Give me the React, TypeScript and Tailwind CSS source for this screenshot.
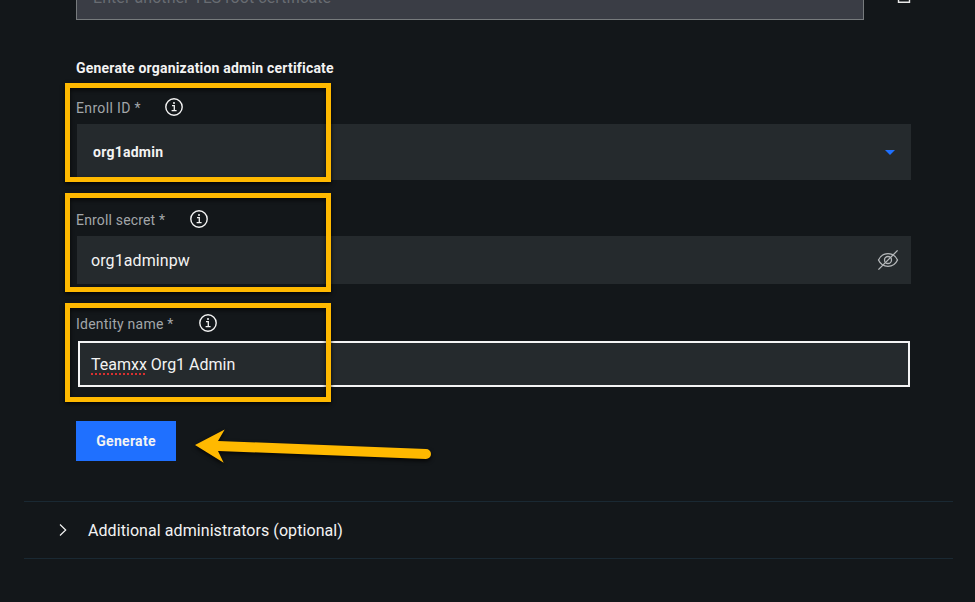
import React from "react";

function InfoIcon() {
  return (
    <svg width="18" height="18" viewBox="0 0 18 18" fill="none" stroke="#f3f3f3" className="shrink-0">
      <circle cx="9" cy="9" r="8.2" strokeWidth="1.4" />
      <path d="M7 7.7h2.3v5M6.6 12.7h5" strokeWidth="1.3" />
      <circle cx="9" cy="4.9" r="1" fill="#f3f3f3" stroke="none" />
    </svg>
  );
}

function FieldLabel({ text, width }: { text: string; width: string }) {
  return (
    <div className="flex h-[18px] items-center text-[14px] leading-[18px] text-[#a2a6a9]">
      <span className={`${width} shrink-0 whitespace-nowrap pt-0.5`}>{text}</span>
      <InfoIcon />
    </div>
  );
}

function Highlight({ top }: { top: string }) {
  return (
    <div
      className={`absolute left-[65px] ${top} h-[99px] w-[266px] border-[5px] border-[#ffb900] shadow-[0_2px_4px_rgba(0,0,0,0.8),inset_0_2px_4px_rgba(0,0,0,0.7)]`}
    />
  );
}

export default function App() {
  return (
    <main className="relative h-[602px] w-[975px] overflow-hidden bg-[#13171a] font-['Roboto','Liberation_Sans',sans-serif] text-[#f3f3f3]">
      <div className="flex h-[20px] items-start pl-[76px]">
        <div className="flex h-[20px] w-[788px] items-end overflow-hidden border-x border-b border-[#777b7d] bg-[#3a3d45] pb-[11px] pl-4 text-[16px] leading-5 tracking-[0.07px] text-[#686c72]">
          Enter another TLS root certificate
        </div>
        <svg width="14" height="4" viewBox="0 0 14 4" className="ml-[33px]" fill="none">
          <path d="M1.5 0V2.2H12.5V0" stroke="#e8e8e8" strokeWidth="1.4" />
        </svg>
      </div>

      <section className="flex w-[911px] flex-col pl-[76px] pt-[39px]">
        <h2 className="h-[18px] text-[14px] font-bold leading-[18px] tracking-[0.2px]">
          Generate organization admin certificate
        </h2>

        <div className="pt-[21px]">
          <FieldLabel text="Enroll ID *" width="w-[89px] tracking-[0.35px]" />
          <div className="mt-2 ml-px flex h-[56px] items-center justify-between bg-[#252a2d] pl-4 pr-4 text-[14px] font-bold">
            <span className="tracking-[0.25px]">org1admin</span>
            <svg width="10" height="5" viewBox="0 0 10 5">
              <path d="M0 0H10L5 5Z" fill="#1f70ff" />
            </svg>
          </div>
        </div>

        <div className="pt-[30px]">
          <FieldLabel text="Enroll secret *" width="w-[114px] tracking-[0.17px]" />
          <div className="mt-2 ml-px flex h-[48px] items-center justify-between bg-[#252a2d] pl-[14px] pr-3 text-[16px]">
            <span className="pt-0.5 tracking-[0.1px]">org1adminpw</span>
            <svg width="22" height="22" viewBox="0 0 22 22" fill="none" stroke="#b5b8ba" strokeWidth="1.3">
              <path d="M1.5 11C3.3 7.1 6.8 4.7 11 4.7S18.7 7.1 20.5 11C18.7 14.9 15.2 17.3 11 17.3S3.3 14.9 1.5 11Z" />
              <circle cx="11" cy="11" r="3.5" />
              <path d="M1.4 20.6 20.6 1.4" />
            </svg>
          </div>
        </div>

        <div className="pt-[30px]">
          <FieldLabel text="Identity name *" width="w-[123px] tracking-[0.23px]" />
          <div className="ml-0.5 mr-px mt-[9px] flex h-[46px] items-center border-2 border-[#f4f4f4] bg-[#252a2d] pl-[11px] pt-0.5 text-[16px]">
            <span className="underline decoration-[#da3030] decoration-dotted decoration-2 underline-offset-[3px]">Teamxx</span>
            <span className="whitespace-pre"> Org1 Admin</span>
          </div>
        </div>

        <button className="mt-[34px] h-10 w-[100px] bg-[#1f70ff] text-[14px] font-bold tracking-[0.3px]">
          Generate
        </button>
      </section>

      <div className="ml-6 mt-10 flex h-[58px] w-[929px] items-center border-y border-[#1a2933] pl-[35px] text-[16px]">
        <svg width="8" height="12" viewBox="0 0 8 12" fill="none" stroke="#f3f3f3" strokeWidth="1.2">
          <path d="m1 .5 5.7 5.5L1 11.5" />
        </svg>
        <span className="ml-[21px] pt-0.5 tracking-[0.07px]">Additional administrators (optional)</span>
      </div>

      <Highlight top="top-[83px]" />
      <Highlight top="top-[193px]" />
      <Highlight top="top-[303px]" />
      <svg
        width="250"
        height="50"
        viewBox="190 420 250 50"
        className="absolute left-[190px] top-[420px] drop-shadow-[0_2px_2px_rgba(0,0,0,0.8)]"
      >
        <path d="M195 445 224.7 429.5 218 441 426 449A5 5 0 0 1 426 459L218 451 223.7 462.8Z" fill="#ffb900" />
      </svg>
    </main>
  );
}
